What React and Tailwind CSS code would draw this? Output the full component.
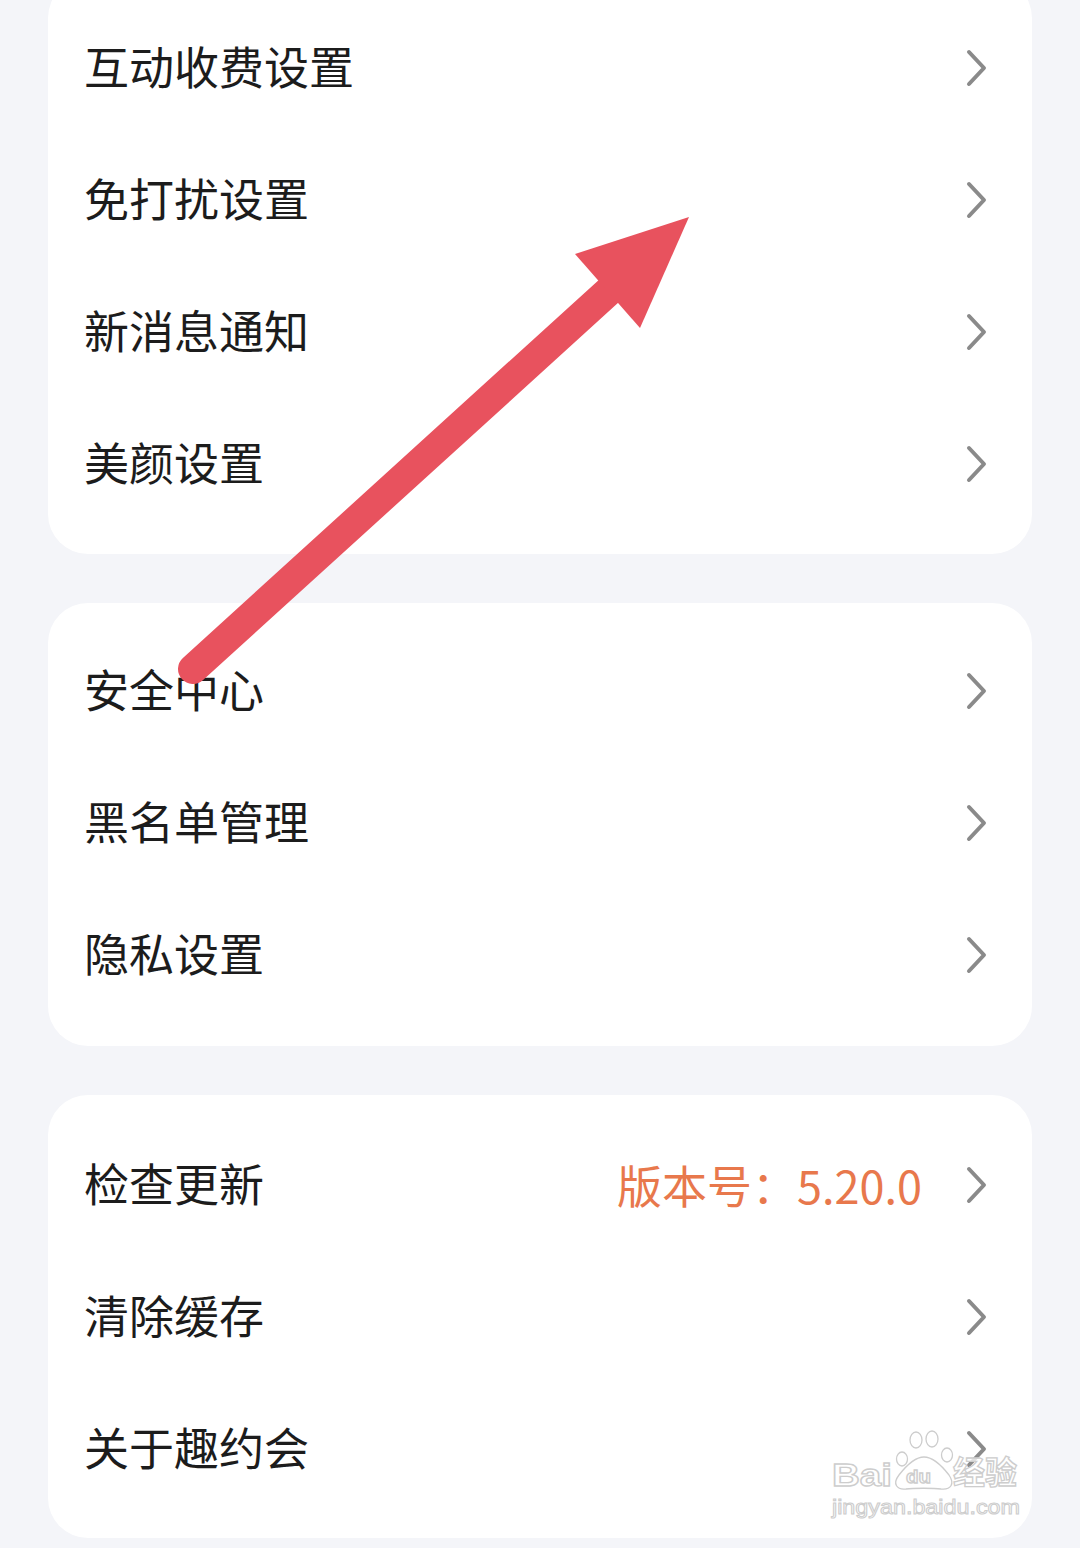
import React from "react";

const Chevron = () => (
  <svg width="22" height="38" viewBox="0 0 22 38" className="shrink-0">
    <path d="M3 3 L18 19 L3 35" fill="none" stroke="#8a8a8a" strokeWidth="4" strokeLinecap="round" strokeLinejoin="round" />
  </svg>
);

const Row = ({ label, extra }) => (
  <div className="flex h-[132px] items-center justify-between pl-[36px] pr-[44px]">
    <span className="mb-[6px] text-[45px] leading-none text-[#1c1c1c]">{label}</span>
    <div className="flex items-center gap-[44px]">
      {extra && <span className="mb-[2px] text-[45px] leading-none text-[#e8784c]">{extra}</span>}
      <Chevron />
    </div>
  </div>
);

const Card = ({ items, className }) => (
  <div className={"rounded-[40px] bg-white " + className}>
    {items.map((it) => (
      <Row key={it.label} label={it.label} extra={it.extra} />
    ))}
  </div>
);

const Watermark = () => (
  <svg
    className="pointer-events-none absolute left-[820px] top-[1425px]"
    width="210"
    height="105"
    viewBox="0 0 210 105"
  >
    <g fill="rgba(255,255,255,0.75)" stroke="#cdcdcd" strokeWidth="1.3">
      <text
        x="12"
        y="61"
        fontSize="31"
        fontWeight="700"
        textLength="60"
        lengthAdjust="spacingAndGlyphs"
        style={{ fontFamily: '"Liberation Sans", Arial, sans-serif' }}
      >
        Bai
      </text>
      <ellipse cx="82" cy="34" rx="5.5" ry="7" />
      <ellipse cx="96" cy="15" rx="6" ry="8" />
      <ellipse cx="112" cy="14" rx="6" ry="8" />
      <ellipse cx="127" cy="30" rx="5.5" ry="7" />
      <path d="M104 32 C95 32 86 41 79 50 C72 59 77 65 86 64 C93 63 114 63 121 64 C131 65 135 59 129 50 C122 41 113 32 104 32 Z" />
      <text
        x="86"
        y="58"
        fontSize="18"
        fontWeight="700"
        textLength="25"
        lengthAdjust="spacingAndGlyphs"
        style={{ fontFamily: '"Liberation Sans", Arial, sans-serif' }}
      >
        du
      </text>
      <text
        x="133"
        y="59"
        fontSize="32"
        fontWeight="700"
        textLength="64"
        lengthAdjust="spacingAndGlyphs"
        style={{ fontFamily: '"Noto Sans CJK SC", sans-serif' }}
      >
        经验
      </text>
      <text
        x="12"
        y="89"
        fontSize="20"
        strokeWidth="1"
        textLength="188"
        lengthAdjust="spacingAndGlyphs"
        style={{ fontFamily: '"Liberation Sans", Arial, sans-serif' }}
      >
        jingyan.baidu.com
      </text>
    </g>
  </svg>
);

export default function App() {
  return (
    <div
      className="relative h-[1548px] w-[1080px] overflow-hidden bg-[#f4f5f9]"
      style={{ fontFamily: '"Noto Sans CJK SC", "Noto Sans", sans-serif' }}
    >
      <div className="flex flex-col gap-[49px] px-[48px]">
        <Card
          className="-mt-[22px] pt-[24px] pb-[24px]"
          items={[
            { label: "互动收费设置" },
            { label: "免打扰设置" },
            { label: "新消息通知" },
            { label: "美颜设置" },
          ]}
        />
        <Card
          className="pt-[22px] pb-[25px]"
          items={[{ label: "安全中心" }, { label: "黑名单管理" }, { label: "隐私设置" }]}
        />
        <Card
          className="pt-[24px] pb-[23px]"
          items={[
            { label: "检查更新", extra: "版本号：5.20.0" },
            { label: "清除缓存" },
            { label: "关于趣约会" },
          ]}
        />
      </div>

      {/* red annotation arrow */}
      <svg className="pointer-events-none absolute left-0 top-0" width="1080" height="1548" viewBox="0 0 1080 1548">
        <line x1="193" y1="669" x2="610" y2="290" stroke="#e8525e" strokeWidth="30" strokeLinecap="round" />
        <polygon points="689,217 575,254 640,328" fill="#e8525e" />
      </svg>

      <Watermark />
    </div>
  );
}
